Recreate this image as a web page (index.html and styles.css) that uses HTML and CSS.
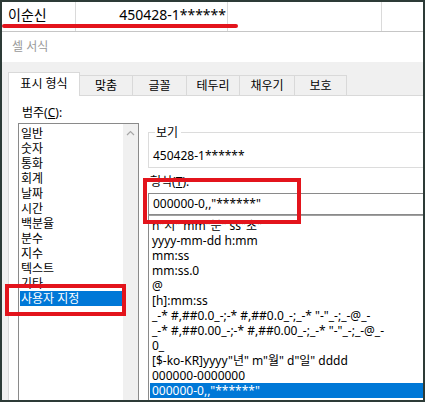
FILE: index.html
```html
<!DOCTYPE html>
<html lang="ko">
<head>
<meta charset="utf-8">
<title>셀 서식</title>
<link rel="stylesheet" href="styles.css">
</head>
<body>
<div class="frame">
  <div class="sheet-row">
    <div class="cell cell-name">이순신</div>
    <div class="cell cell-num">450428-1******</div>
    <div class="cell cell-empty"></div>
    <div class="cell cell-last"></div>
  </div>
  <div class="titlebar">셀 서식</div>
  <div class="dialog">
    <div class="tabs">
      <div class="tab tab-active">표시 형식</div>
      <div class="tab tab-w53">맞춤</div>
      <div class="tab tab-w54">글꼴</div>
      <div class="tab tab-w53">테두리</div>
      <div class="tab tab-w55">채우기</div>
      <div class="tab tab-w52">보호</div>
    </div>
    <div class="panel">
      <div class="col-left">
        <div class="label label-cat">범주(<u>C</u>):</div>
        <div class="listbox">
          <ul class="items">
            <li>일반</li>
            <li>숫자</li>
            <li>통화</li>
            <li>회계</li>
            <li>날짜</li>
            <li>시간</li>
            <li>백분율</li>
            <li>분수</li>
            <li>지수</li>
            <li>텍스트</li>
            <li>기타</li>
            <li class="selected">사용자 지정</li>
          </ul>
          <div class="scrollbar">
            <svg class="arrow" width="15" height="17" viewBox="0 0 15 17"><polyline points="4,11 7.5,7.5 11,11" fill="none" stroke="#a6a6a6" stroke-width="1.2"/></svg>
          </div>
        </div>
      </div>
      <div class="col-right">
        <div class="group">
          <div class="group-title">보기</div>
          <div class="sample">450428-1******</div>
        </div>
        <div class="label label-fmt">형식(<u>T</u>):</div>
        <div class="input">000000-0,,"******"</div>
        <ul class="fmtlist">
          <li>h"시" mm"분" ss"초"</li>
          <li>yyyy-mm-dd h:mm</li>
          <li>mm:ss</li>
          <li>mm:ss.0</li>
          <li>@</li>
          <li>[h]:mm:ss</li>
          <li>_-* #,##0.0_-;-* #,##0.0_-;_-* "-"_-;_-@_-</li>
          <li>_-* #,##0.00_-;-* #,##0.00_-;_-* "-"_-;_-@_-</li>
          <li>0_</li>
          <li>[$-ko-KR]yyyy"년" m"월" d"일" dddd</li>
          <li>000000-0000000</li>
          <li class="selected">000000-0,,"******"</li>
        </ul>
      </div>
    </div>
  </div>
  <div class="mark mark-line"></div>
  <div class="mark mark-cat"></div>
  <div class="mark mark-fmt"></div>
</div>
</body>
</html>
```

FILE: styles.css
```css
* { box-sizing: border-box; }
html, body { margin: 0; padding: 0; background: #ffffff; }
body {
  font-family: "Noto Sans", "Noto Sans CJK KR", sans-serif;
  font-size: 12px;
  color: #000;
}
ul { list-style: none; margin: 0; padding: 0; }
u { text-decoration: underline; text-underline-offset: 1px; }

.frame {
  position: relative;
  width: 425px;
  height: 402px;
  border: 2px solid #2d3b37;
  overflow: hidden;
  background: #fff;
}

/* spreadsheet row */
.sheet-row {
  display: grid;
  grid-template-columns: 74px 152px 154px 1fr;
  height: 30px;
  border-bottom: 1px solid #c6c6c6;
}
.cell {
  border-right: 1px solid #dadada;
  font-size: 14px;
  line-height: 26px;
  white-space: nowrap;
}
.cell-last { border-right: none; }
.cell-name { padding-left: 6px; }
.cell-num { text-align: right; padding-right: 1px; }

/* title */
.titlebar {
  height: 30px;
  line-height: 30px;
  padding-left: 10px;
  color: #999999;
  font-size: 12px;
}

/* dialog */
.dialog {
  background: #f0f0f0;
  height: 400px;
}
.tabs {
  display: flex;
  align-items: flex-end;
  height: 33px;
  padding-left: 6px;
}
.tab {
  height: 20px;
  border: 1px solid #d9d9d9;
  border-bottom: none;
  border-left: none;
  background: #f0f0f0;
  text-align: center;
  line-height: 15px;
  padding-top: 2px;
  white-space: nowrap;
}
.tab-active {
  width: 72px;
  height: 24px;
  margin-bottom: -1px;
  border-left: 1px solid #d9d9d9;
  background: #fff;
  padding-top: 3px;
  position: relative;
  z-index: 1;
}
.tab-w53 { width: 53px; }
.tab-w54 { width: 54px; }
.tab-w55 { width: 55px; }
.tab-w52 { width: 52px; }

.panel {
  display: flex;
  gap: 9px;
  margin-left: 6px;
  width: 520px;
  height: 360px;
  border: 1px solid #d9d9d9;
  background: #fff;
  padding: 9px 0 0 9px;
}
.label { line-height: 15px; white-space: nowrap; }

.col-left { width: 121px; flex: none; }
.label-cat { padding-left: 4px; }
.listbox {
  display: flex;
  margin-top: 3px;
  height: 300px;
  border: 1px solid #8a8a8a;
}
.items {
  flex: 1;
  padding-top: 2px;
}
.items li {
  line-height: 15px;
  height: 15px;
  margin: 0 1px;
  padding-left: 1px;
  white-space: nowrap;
}
.items li.selected,
.fmtlist li.selected {
  background: #0078d7;
  color: #fff;
}
.scrollbar {
  width: 15px;
  flex: none;
  background: #f0f0f0;
}
.arrow { display: block; }

.col-right {
  width: 300px;
  flex: none;
  padding-top: 27px;
}
.group {
  border: 1px solid #dcdcdc;
  padding: 0 0 4px 4px;
}
.group-title {
  display: table;
  margin-top: -8px;
  margin-left: 2px;
  padding: 0 3px 0 1px;
  background: #fff;
  line-height: 15px;
}
.sample {
  margin-top: 8px;
  line-height: 15px;
  white-space: nowrap;
}
.label-fmt { margin-top: 6px; padding-left: 2px; }
.input {
  margin-top: 4px;
  height: 22px;
  border: 1px solid #8a8a8a;
  padding-left: 4px;
  line-height: 19px;
  white-space: nowrap;
}
.fmtlist {
  border: 1px solid #8a8a8a;
  border-top: 1px solid #a0a0a0;
  padding-top: 2px;
  height: 200px;
  overflow: hidden;
}
.fmtlist li {
  line-height: 15px;
  height: 15px;
  margin-left: 1px;
  padding-left: 2px;
  white-space: nowrap;
}

/* red annotations */
.mark {
  position: absolute;
  border: 4px solid #e3141c;
}
.mark-line {
  left: 0;
  top: 22px;
  width: 236px;
  height: 4px;
  border: none;
  background: #e3141c;
  border-radius: 2px;
}
.mark-cat {
  left: 3px;
  top: 282px;
  width: 121px;
  height: 32px;
}
.mark-fmt {
  left: 141px;
  top: 176px;
  width: 158px;
  height: 46px;
}
```
